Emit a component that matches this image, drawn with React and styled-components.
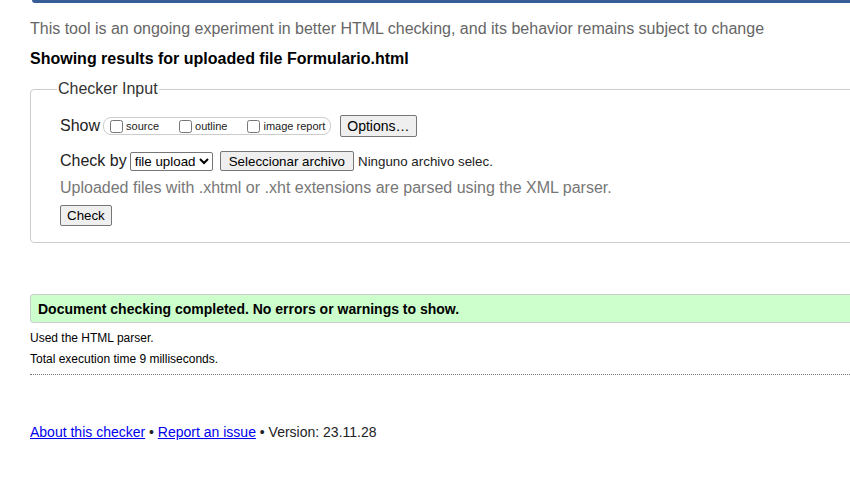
import React from "react";
import styled, { createGlobalStyle } from "styled-components";

const Global = createGlobalStyle`
  html, body {
    margin: 0;
    padding: 0;
    background: #fff;
    overflow: hidden;
  }
  body {
    font-family: "Liberation Sans", Arial, sans-serif;
    color: #222;
  }
`;

const Page = styled.div`
  width: 900px;
  padding-left: 30px;
`;

const TopBar = styled.div`
  height: 3px;
  margin-left: 2px;
  background: #365d95;
  border-bottom-left-radius: 4px;
`;

const Intro = styled.p`
  margin: 17px 0 12px;
  font-size: 16px;
  line-height: 18px;
  color: #666;
`;

const Heading = styled.h2`
  margin: 0;
  font-size: 16px;
  line-height: 18px;
  font-weight: bold;
  color: #000;
`;

const Fieldset = styled.fieldset`
  margin: 12px 0 0;
  padding: 17px 0 16px 29px;
  border: 1px solid #ccc;
  border-radius: 4px;
  min-width: 0;
`;

const Legend = styled.legend`
  margin-left: -3px;
  padding: 0 1px;
  font-size: 16px;
  line-height: 18px;
  color: #333;
`;

const Row = styled.div`
  display: flex;
  align-items: center;
  height: ${(p) => p.h || 22}px;
  margin-top: ${(p) => p.mt || 0}px;
  font-size: 16px;
  color: #222;
`;

const Label = styled.span`
  margin-right: 3px;
`;

const Group = styled.span`
  display: inline-flex;
  align-items: center;
  height: 16px;
  padding: 0 5px 0 3px;
  border: 1px solid #ccc;
  border-radius: 8px;
  font-size: 11px;
  margin-right: 9px;
`;

const Opt = styled.label`
  display: inline-flex;
  align-items: center;
  margin-right: ${(p) => (p.last ? 0 : 17)}px;
  input {
    margin: 0 3px 0 3px;
    width: 13px;
    height: 13px;
  }
`;

const Btn = styled.button`
  font-family: "Liberation Sans", Arial, sans-serif;
  font-size: ${(p) => p.fs || 13.33}px;
  height: ${(p) => p.h || 21}px;
  padding: 0 ${(p) => p.px || 6}px;
  background: #efefef;
  border: 1px solid #767676;
  border-radius: 2px;
  color: #000;
`;

const Select = styled.select`
  font-family: "Liberation Sans", Arial, sans-serif;
  font-size: 13.33px;
  height: 19px;
  margin: 0 7px 0 0;
  border: 1px solid #767676;
  border-radius: 2px;
  background: #fff;
  color: #000;
`;

const FileName = styled.span`
  font-size: 13.33px;
  margin-left: 4px;
`;

const Hint = styled.div`
  margin-top: 7px;
  font-size: 16px;
  line-height: 18px;
  color: #777;
`;

const Success = styled.div`
  margin-top: 51px;
  height: 27px;
  display: flex;
  align-items: center;
  padding-left: 7px;
  background: #ccffcc;
  border: 1px solid #ccc;
  border-radius: 3px;
  font-size: 14px;
  font-weight: bold;
  color: #000;
`;

const Detail = styled.p`
  margin: ${(p) => p.mt}px 0 0;
  font-size: 12px;
  line-height: 14px;
  color: #000;
`;

const Dotted = styled.div`
  margin-top: 8px;
  border-top: 1px dotted #777;
`;

const Footer = styled.p`
  margin: 49px 0 0;
  font-size: 14px;
  line-height: 16px;
  color: #222;
  a {
    color: #0000ee;
    text-decoration: underline;
  }
`;

export default function App() {
  return (
    <>
      <Global />
      <Page>
        <TopBar />
        <Intro>
          This tool is an ongoing experiment in better HTML checking, and its
          behavior remains subject to change
        </Intro>
        <Heading>Showing results for uploaded file Formulario.html</Heading>
        <Fieldset>
          <Legend>Checker Input</Legend>
          <Row>
            <Label>Show</Label>
            <Group>
              <Opt>
                <input type="checkbox" />
                source
              </Opt>
              <Opt>
                <input type="checkbox" />
                outline
              </Opt>
              <Opt last>
                <input type="checkbox" />
                image report
              </Opt>
            </Group>
            <Btn fs={14} h={22} px={6}>
              Options…
            </Btn>
          </Row>
          <Row mt={13}>
            <Label>Check by</Label>
            <Select defaultValue="file">
              <option value="file">file upload</option>
            </Select>
            <Btn h={20} px={8}>
              Seleccionar archivo
            </Btn>
            <FileName>Ninguno archivo selec.</FileName>
          </Row>
          <Hint>
            Uploaded files with .xhtml or .xht extensions are parsed using the
            XML parser.
          </Hint>
          <Row mt={8} h={21}>
            <Btn>Check</Btn>
          </Row>
        </Fieldset>
        <Success>Document checking completed. No errors or warnings to show.</Success>
        <Detail mt={8}>Used the HTML parser.</Detail>
        <Detail mt={7}>Total execution time 9 milliseconds.</Detail>
        <Dotted />
        <Footer>
          <a href="#">About this checker</a> • <a href="#">Report an issue</a> •
          Version: 23.11.28
        </Footer>
      </Page>
    </>
  );
}
